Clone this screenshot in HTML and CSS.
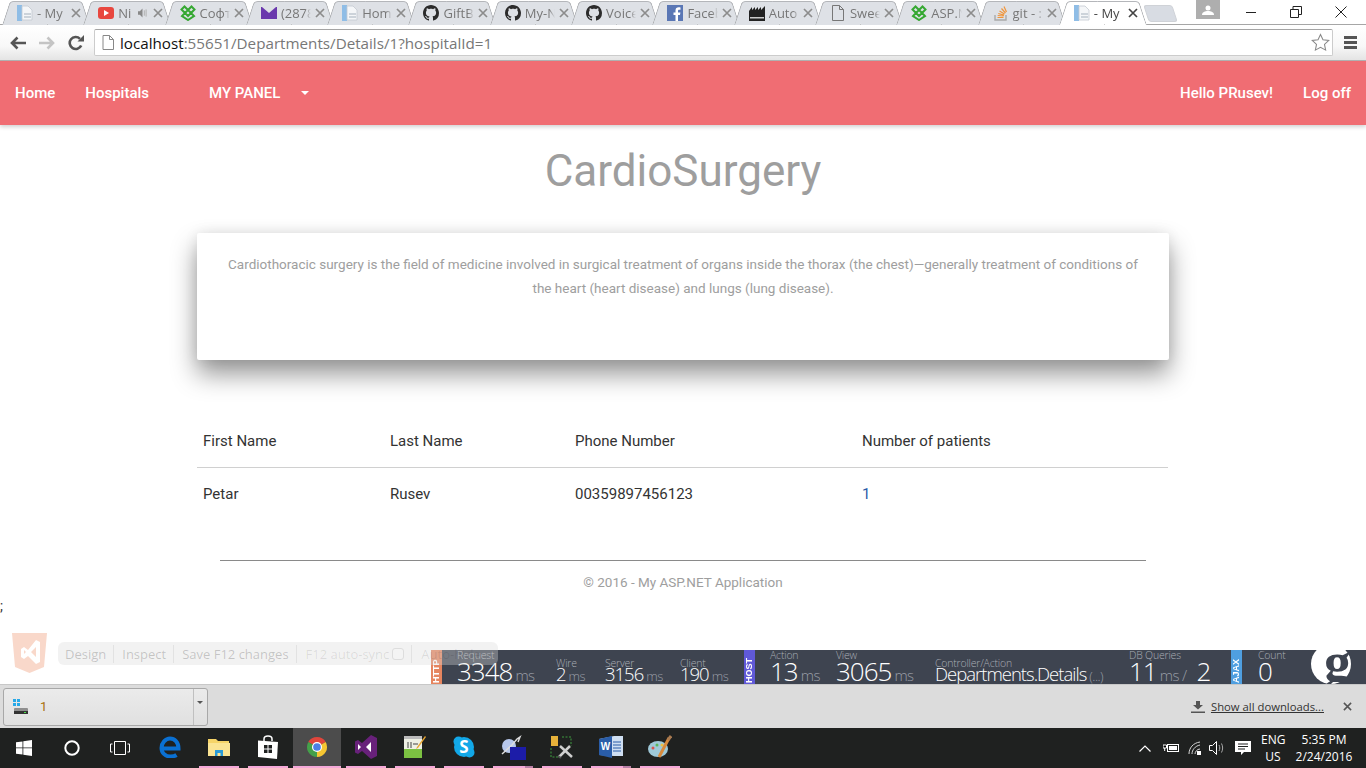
FILE: index.html
```html
<!DOCTYPE html>
<html lang="en">
<head>
    <meta charset="UTF-8">
    <title>CardioSurgery - My ASP.NET Application</title>
    <link rel="stylesheet" href="styles.css">
</head>
<body>
    <svg class="defs" width="0" height="0">
        <symbol id="i-x" viewBox="0 0 10 10">
            <path d="M1 1l8 8M9 1l-8 8" fill="none" stroke="currentColor" stroke-width="1.700"/>
        </symbol>
        <symbol id="i-doc" viewBox="0 0 16 16">
            <rect x="0" y="0" width="5" height="16" fill="#8fbde6"/>
            <path d="M5 1h6l4 4v10H5z" fill="#f4f6f8" stroke="#c3c9d0" stroke-width=".8"/>
            <rect x="7" y="8" width="7" height="2" fill="#ccd3da"/>
            <rect x="7" y="11" width="7" height="2" fill="#ccd3da"/>
        </symbol>
        <symbol id="i-page" viewBox="0 0 16 16">
            <path d="M2.500 .5h7l4 4v11h-11z M9.500 .5v4h4" fill="none" stroke="#777" stroke-width="1"/>
        </symbol>
        <symbol id="i-gh" viewBox="0 0 16 16">
            <path fill="#2b2b2b" d="M8 0C3.58 0 0 3.58 0 8c0 3.54 2.29 6.53 5.47 7.59.4.07.55-.17.55-.38 0-.19-.01-.82-.01-1.49-2.01.37-2.53-.49-2.69-.94-.09-.23-.48-.94-.82-1.13-.28-.15-.68-.52-.01-.53.63-.01 1.08.58 1.23.82.72 1.21 1.87.87 2.33.66.07-.52.28-.87.51-1.07-1.78-.2-3.64-.89-3.64-3.95 0-.87.31-1.59.82-2.15-.08-.2-.36-1.02.08-2.12 0 0 .67-.21 2.2.82.64-.18 1.32-.27 2-.27.68 0 1.36.09 2 .27 1.53-1.04 2.2-.82 2.2-.82.44 1.1.16 1.92.08 2.12.51.56.82 1.27.82 2.15 0 3.07-1.87 3.75-3.65 3.95.29.25.54.73.54 1.48 0 1.07-.01 1.93-.01 2.2 0 .21.15.46.55.38A8.013 8.013 0 0016 8c0-4.42-3.58-8-8-8z"/>
        </symbol>
        <symbol id="i-soft" viewBox="0 0 16 16">
            <path d="M1.500 4.500L4.500 1.500 8 5l3.500-3.500 3 3L11 8l3 3-6 4-6-4 3-3z M5 8l3-3 3 3-3 3z" fill="none" stroke="#36a832" stroke-width="2"/>
        </symbol>
    </svg>

    <div class="tabstrip">
        <div class="tab"><svg class="fav"><use href="#i-doc"/></svg><span class="tab-title">- My</span><svg class="tab-x"><use href="#i-x"/></svg></div>
        <div class="tab">
            <svg class="fav" viewBox="0 0 16 16"><rect y="2" width="16" height="12" rx="3" fill="#e8473f"/><path d="M6 5l5 3-5 3z" fill="#fff"/></svg>
            <span class="tab-title">Ni</span>
            <svg class="tab-sound" viewBox="0 0 10 10"><path d="M0 3h2l3-3v10l-3-3H0z" fill="#888"/><path d="M7 2v6M9 1v8" stroke="#aaa"/></svg>
            <svg class="tab-x"><use href="#i-x"/></svg>
        </div>
        <div class="tab"><svg class="fav"><use href="#i-soft"/></svg><span class="tab-title">Софт</span><svg class="tab-x"><use href="#i-x"/></svg></div>
        <div class="tab">
            <svg class="fav" viewBox="0 0 16 16"><rect y="2" width="16" height="12" fill="#6a38ad"/><path d="M1 2h14L8 8z" fill="#dee1e6"/></svg>
            <span class="tab-title">(2878</span><svg class="tab-x"><use href="#i-x"/></svg>
        </div>
        <div class="tab"><svg class="fav"><use href="#i-doc"/></svg><span class="tab-title">Hom</span><svg class="tab-x"><use href="#i-x"/></svg></div>
        <div class="tab"><svg class="fav"><use href="#i-gh"/></svg><span class="tab-title">GiftB</span><svg class="tab-x"><use href="#i-x"/></svg></div>
        <div class="tab"><svg class="fav"><use href="#i-gh"/></svg><span class="tab-title">My-N</span><svg class="tab-x"><use href="#i-x"/></svg></div>
        <div class="tab"><svg class="fav"><use href="#i-gh"/></svg><span class="tab-title">Voice</span><svg class="tab-x"><use href="#i-x"/></svg></div>
        <div class="tab">
            <svg class="fav" viewBox="0 0 16 16"><rect width="16" height="16" fill="#5a77b5"/><path d="M11 16v-6h2l.4-2.500H11V6c0-.8.3-1.300 1.300-1.300h1.200V2.400C13 2.300 12.300 2.300 11.700 2.300 9.800 2.300 8.500 3.400 8.500 5.600v1.900H6.500V10h2v6z" fill="#fff"/></svg>
            <span class="tab-title">Faceb</span><svg class="tab-x"><use href="#i-x"/></svg>
        </div>
        <div class="tab">
            <svg class="fav" viewBox="0 0 16 16"><path d="M0 16V6l3-4v3l3-3v3l3-3v3l3-3v3l4-4v15z" fill="#222"/><rect x="1" y="12" width="14" height="1.500" fill="#ccc"/></svg>
            <span class="tab-title">Auto</span><svg class="tab-x"><use href="#i-x"/></svg>
        </div>
        <div class="tab"><svg class="fav"><use href="#i-page"/></svg><span class="tab-title">Swee</span><svg class="tab-x"><use href="#i-x"/></svg></div>
        <div class="tab"><svg class="fav"><use href="#i-soft"/></svg><span class="tab-title">ASP.N</span><svg class="tab-x"><use href="#i-x"/></svg></div>
        <div class="tab">
            <svg class="fav" viewBox="0 0 16 16"><path d="M2 10v5h11v-5" fill="none" stroke="#a9a9a9" stroke-width="1.400"/><path d="M4.500 12.500h6M4.700 10.500l6 .5M5.300 8.500l5.800 1.600M6.500 6l5 3M8.500 3.500l4 4.500M11 1.500l2.500 5.500" stroke="#f0963c" stroke-width="1.200"/></svg>
            <span class="tab-title">git - :</span><svg class="tab-x"><use href="#i-x"/></svg>
        </div>
        <div class="tab tab-active"><svg class="fav"><use href="#i-doc"/></svg><span class="tab-title">- My</span><svg class="tab-x"><use href="#i-x"/></svg></div>
        <div class="tab-new"></div>
        <div class="profile">
            <svg width="12" height="10" viewBox="0 0 12 10"><circle cx="6" cy="3" r="2.500" fill="#fff"/><path d="M0 10c0-3 3-4 6-4s6 1 6 4z" fill="#fff"/></svg>
        </div>
        <div class="winctl">
            <svg width="12" height="12" viewBox="0 0 12 12"><path d="M1 6.500h10" stroke="#222"/></svg>
            <svg width="12" height="12" viewBox="0 0 12 12"><path d="M.5 3.500h8v8h-8zM3 3.500V.500h8.500v8H8.500" fill="none" stroke="#222"/></svg>
            <svg width="12" height="12" viewBox="0 0 12 12"><path d="M.5 .5l11 11M11.500 .5l-11 11" stroke="#222"/></svg>
        </div>
    </div>

    <div class="toolbar">
        <svg class="tool-btn" viewBox="0 0 16 14"><path d="M16 7H2M7.500 1.500L2 7l5.500 5.500" fill="none" stroke="#555" stroke-width="2.600"/></svg>
        <svg class="tool-btn" viewBox="0 0 16 14"><path d="M0 7h14M8.500 1.500L14 7l-5.500 5.500" fill="none" stroke="#c4c4c4" stroke-width="2.600"/></svg>
        <svg class="tool-btn" viewBox="0 0 16 16"><path d="M13.200 10.500A6 6 0 1 1 12 3.800" fill="none" stroke="#555" stroke-width="2.600"/><path d="M9.500 6.500H16V0z" fill="#555"/></svg>
        <div class="omnibox">
            <svg class="omni-page" viewBox="0 0 12 15"><path d="M1 .5h6.500l4 4V14.500H1z M7.500 .5v4h4" fill="#fff" stroke="#888"/></svg>
            <div class="url"><span class="url-host">localhost</span>:55651/Departments/Details/1?hospitalId=1</div>
            <svg class="omni-star" viewBox="0 0 20 20"><path d="M10 1.500l2.600 5.600 6.100.7-4.500 4.200 1.200 6L10 15l-5.400 3 1.200-6L1.300 7.800l6.100-.7z" fill="#fff" stroke="#888" stroke-width="1.100"/></svg>
        </div>
        <div class="menu-btn"><i></i><i></i><i></i></div>
    </div>

    <div class="page">
        <nav class="navbar">
            <a class="nav-link">Home</a>
            <a class="nav-link">Hospitals</a>
            <a class="nav-link nav-panel">MY PANEL <span class="caret"></span></a>
            <a class="nav-link nav-hello">Hello PRusev!</a>
            <a class="nav-link">Log off</a>
        </nav>

        <h1 class="title">CardioSurgery</h1>

        <div class="card">
            <p>Cardiothoracic surgery is the field of medicine involved in surgical treatment of organs inside the thorax (the chest)—generally treatment of conditions of the heart (heart disease) and lungs (lung disease).</p>
        </div>

        <table class="doctors">
            <thead>
                <tr>
                    <th class="col-first">First Name</th>
                    <th class="col-last">Last Name</th>
                    <th class="col-phone">Phone Number</th>
                    <th>Number of patients</th>
                </tr>
            </thead>
            <tbody>
                <tr>
                    <td>Petar</td>
                    <td>Rusev</td>
                    <td>00359897456123</td>
                    <td><a class="patients">1</a></td>
                </tr>
            </tbody>
        </table>

        <hr class="rule">
        <footer class="footer">© 2016 - My ASP.NET Application</footer>
        <div class="stray">;</div>

        <!-- glimpse bar and browser link sit over the bottom of the page -->
        <div class="glimpse">
            <div class="g-tag g-http">HTTP</div>
            <div class="g-item g-big g-request"><label>Request</label><div>3348<small>ms</small></div></div>
            <div class="g-item g-wire"><label>Wire</label><div>2<small>ms</small></div></div>
            <div class="g-item g-server"><label>Server</label><div>3156<small>ms</small></div></div>
            <div class="g-item g-client"><label>Client</label><div>190<small>ms</small></div></div>
            <div class="g-tag g-host">HOST</div>
            <div class="g-item g-big g-action"><label>Action</label><div>13<small>ms</small></div></div>
            <div class="g-item g-big g-view"><label>View</label><div>3065<small>ms</small></div></div>
            <div class="g-item g-ctrl"><label>Controller/Action</label><div>Departments.Details<small>(...)</small></div></div>
            <div class="g-item g-big g-db"><label>DB Queries</label><div>11<small>ms</small><small class="g-slash">/</small>2</div></div>
            <div class="g-tag g-ajax">AJAX</div>
            <div class="g-item g-big g-count"><label>Count</label><div>0</div></div>
            <div class="g-logo">g</div>
        </div>

        <div class="browserlink">
            <svg class="bl-logo" viewBox="0 0 35 40">
                <path d="M0 0h35l-3 34-14.500 6L3 34z" fill="#f9d8ca"/>
                <path d="M24 7l4 2v20l-4 2-8-8-4 3-3-2v-8l3-2 4 3zM12 17v4l2-2zM24 14l-5 5 5 5z" fill="#fff" fill-rule="evenodd"/>
            </svg>
            <div class="bl-pill">
                <span>Design</span>
                <span>Inspect</span>
                <span>Save F12 changes</span>
                <span class="bl-off">F12 auto-sync<i class="bl-check"></i></span>
                <span class="bl-off">Auto-hide</span>
            </div>
        </div>
    </div>

    <div class="downloads">
        <div class="dl-item">
            <div class="dl-main">
                <svg width="16" height="16" viewBox="0 0 16 16"><g fill="#27a9e8"><rect width="3" height="3"/><rect x="4" width="3" height="3"/><rect y="4" width="3" height="3"/><rect x="4" y="4" width="3" height="3"/></g><rect x="1" y="9" width="14" height="6" rx="1" fill="#8f8f8f"/><rect x="1" y="12" width="14" height="3" fill="#333"/><rect x="11" y="13" width="2" height="1" fill="#4be04b"/></svg>
                <span class="dl-name">1</span>
            </div>
            <div class="dl-arrow"></div>
        </div>
        <div class="dl-all">
            <svg width="14" height="12" viewBox="0 0 14 12"><path d="M5 0h4v4h3L7 8.500 2 4h3zM0 10.500h14V12H0z" fill="#555"/></svg>
            <a>Show all downloads...</a>
        </div>
        <svg class="dl-close"><use href="#i-x"/></svg>
    </div>

    <div class="taskbar">
        <div class="sys-btn"><svg width="16" height="16" viewBox="0 0 16 16"><path d="M0 2.300L6.500 1.400V7.500H0zM7.300 1.300L16 0V7.500H7.300zM0 8.300H6.500V14.500L0 13.700zM7.300 8.300H16V16L7.300 14.700z" fill="#fff"/></svg></div>
        <div class="sys-btn"><svg width="16" height="16" viewBox="0 0 16 16"><circle cx="8" cy="8" r="6.700" fill="none" stroke="#fff" stroke-width="2"/></svg></div>
        <div class="sys-btn"><svg width="20" height="14" viewBox="0 0 20 14"><path d="M4.500 .5h11v13h-11zM2.500 3H.5v8h2M17.500 3h2v8h-2" fill="none" stroke="#fff"/></svg></div>
        <div class="apps">
            <div class="app app-edge"><div class="app-icon"><svg width="22" height="22" viewBox="0 0 22 22"><path d="M3 12.500h16.500C19.500 6 15.500 2.500 11 2.500S2.500 7 2.500 12c0 5 4 8.500 9 8.500 2.500 0 4.500-.5 6-1.500" fill="none" stroke="#0a70d2" stroke-width="4"/></svg></div></div>
            <div class="app"><div class="app-icon"><svg width="22" height="20" viewBox="0 0 22 20"><path d="M0 2h8l2 2h11v15H0z" fill="#f6d468"/><path d="M0 6h22v13H0z" fill="#fbe493"/><path d="M7 19v-6h8v6h-2.500v-3h-3v3z" fill="#2a9ad6"/></svg></div><div class="app-line"></div></div>
            <div class="app"><div class="app-icon"><svg width="22" height="24" viewBox="0 0 22 24"><path d="M7 6V4c0-4 8-4 8 0v2" fill="none" stroke="#fff" stroke-width="1.500"/><path d="M1 5.500L21 7l-1 17L1 22z" fill="#fff"/><path d="M7 10h3.500v3.500H7zM11.500 10H15v3.500h-3.500zM7 14.500h3.500V18H7zM11.500 14.500H15V18h-3.500z" fill="#1f2120"/></svg></div><div class="app-line"></div></div>
            <div class="app app-on"><div class="app-icon"><svg width="22" height="22" viewBox="0 0 24 24"><path d="M2.500 6.500L12 12l9.500-5.500A11 11 0 0 0 2.500 6.500z" fill="#e0463c"/><path d="M21.500 6.500L12 12v11a11 11 0 0 0 9.500-16.500z" fill="#f6c632"/><path d="M12 12v11A11 11 0 0 1 2.500 6.500z" fill="#44a04a"/><circle cx="12" cy="12" r="5.500" fill="#fff"/><circle cx="12" cy="12" r="4.200" fill="#4a80e6"/></svg></div><div class="app-line"></div></div>
            <div class="app"><div class="app-icon"><svg width="22" height="24" viewBox="0 0 22 24"><path d="M16 0l6 3v18l-6 3-9-8-4 3-3-1.500v-11L3 5l4 3z" fill="#68217a"/><path d="M16 7l-5 5 5 5zM3 9v6l3-3z" fill="#fff"/></svg></div><div class="app-line"></div></div>
            <div class="app"><div class="app-icon"><svg width="22" height="24" viewBox="0 0 22 24"><rect y="1" width="18" height="22" fill="#eef0e4"/><rect y="1" width="18" height="3" fill="#bbb"/><rect y="14" width="18" height="9" fill="#7cc142"/><path d="M4 7v6M7 7v6M9 9h5" stroke="#444" fill="none"/><path d="M21 1l1 1-8 11-2 1 1-2z" fill="#e8a531"/></svg></div><div class="app-line"></div></div>
            <div class="app"><div class="app-icon"><svg width="24" height="24" viewBox="0 0 24 24"><circle cx="12" cy="12" r="10" fill="#12a8e8"/><circle cx="6.500" cy="6.500" r="5" fill="#12a8e8"/><circle cx="17.500" cy="17.500" r="5" fill="#12a8e8"/><text class="skype-s" x="12" y="18" text-anchor="middle">S</text></svg></div><div class="app-line"></div></div>
            <div class="app"><div class="app-icon"><svg width="26" height="26" viewBox="0 0 26 26"><circle cx="9" cy="12" r="7" fill="#b7c8ec"/><path d="M2 20l10-9 5-6 3-2-2 5" fill="none" stroke="#ddd" stroke-width="1.500"/><rect x="10" y="13" width="16" height="16" fill="#1c1ca8"/></svg></div><div class="app-line app-line-split"></div></div>
            <div class="app"><div class="app-icon"><svg width="24" height="24" viewBox="0 0 24 24"><rect x="1" y="1" width="7" height="10" fill="#e8b33a"/><path d="M1 13v9h8M12 2h9v9" fill="none" stroke="#3f9c3f" stroke-dasharray="2 1.500"/><path d="M9 22l11-11M22 22L10 11" stroke="#cfcfcf" stroke-width="2.500"/><path d="M8 21l3 2" stroke="#555" stroke-width="2"/></svg></div><div class="app-line"></div></div>
            <div class="app"><div class="app-icon"><svg width="24" height="22" viewBox="0 0 24 22"><path d="M0 3l15-3h9v20h-9L0 19z" fill="#cfdff2"/><path d="M0 3l13-3v22L0 19z" fill="#2a5da8"/><path d="M14 6h8M14 9h8M14 12h8M14 15h8" stroke="#2a5da8"/><text class="word-w" x="6.500" y="14" text-anchor="middle">W</text></svg></div><div class="app-line app-line-split"></div></div>
            <div class="app"><div class="app-icon"><svg width="24" height="24" viewBox="0 0 24 24"><ellipse cx="10" cy="14" rx="10" ry="8" fill="#9fc9d8"/><circle cx="5" cy="13" r="1.500" fill="#d9534f"/><circle cx="9" cy="10" r="1.500" fill="#5cb85c"/><circle cx="14" cy="10" r="1.500" fill="#f0c040"/><path d="M11 22L21 3" stroke="#d88a3c" stroke-width="3"/><path d="M20 5l3-4" stroke="#a87a50" stroke-width="3"/></svg></div><div class="app-line"></div></div>
        </div>
        <div class="tray">
            <svg class="tray-chev" width="12" height="7" viewBox="0 0 12 7"><path d="M.5 6.500L6 1l5.500 5.500" fill="none" stroke="#fff" stroke-width="1.200"/></svg>
            <svg class="tray-batt" width="16" height="10" viewBox="0 0 16 10"><rect x="4.500" y="1.500" width="11" height="7" fill="none" stroke="#fff"/><rect x="6" y="3" width="8" height="4" fill="#fff"/><path d="M0 2h3.500v3H0zM1.700 5v3" stroke="#fff"/></svg>
            <svg class="tray-wifi" width="14" height="14" viewBox="0 0 14 14"><path d="M1 13C1 7 5 2 12 1M4 13c0-4 3-8 8-9M7 13c0-2 2-5 5-5" fill="none" stroke="#d8d8d8"/><rect x="9" y="10" width="4" height="4" fill="#fff"/></svg>
            <svg class="tray-vol" width="16" height="14" viewBox="0 0 16 14"><path d="M.5 4.500h3l4-4v13l-4-4h-3z" fill="none" stroke="#fff"/><path d="M10 4c1 2 1 4 0 6M12.500 2.500c1.500 3 1.500 6 0 9" fill="none" stroke="#aaa"/></svg>
            <svg class="tray-note" width="16" height="16" viewBox="0 0 16 16"><path d="M0 1h16v11H9l-3 3v-3H0z" fill="#fff"/><path d="M3 4h10M3 6.500h10M3 9h7" stroke="#1f2120"/></svg>
            <div class="tray-lang">ENG<br>US</div>
            <div class="tray-clock">5:35 PM<br>2/24/2016</div>
        </div>
    </div>
</body>
</html>
```

FILE: styles.css
```css
html, body {
    margin: 0;
    height: 768px;
    overflow: hidden;
}
body {
    display: flex;
    flex-direction: column;
    background-color: #fff;
    font-family: Roboto, Arial, sans-serif;
}
.defs {
    display: block;
    height: 0;
}

/* chrome tabs */
.tabstrip {
    display: flex;
    height: 24px;
    flex: none;
    padding-top: 1px;
    box-sizing: border-box;
    background-color: #fff;
    font-family: "Open Sans", sans-serif;
}
.tab {
    position: relative;
    z-index: 0;
    display: flex;
    align-items: center;
    flex: none;
    width: 81.3px;
    height: 24px;
    box-sizing: border-box;
    padding-left: 17px;
    font-size: 13px;
    color: #777;
}
.tab::before, .tab::after {
    content: "";
    position: absolute;
    z-index: -1;
    top: 0;
    bottom: 0;
    background-color: #dee1e6;
    border-top: 1px solid #b4b6ba;
}
.tab::before {
    left: 6px;
    width: 44px;
    border-left: 1px solid #a9abae;
    border-top-left-radius: 4px;
    transform: skewX(-18deg);
}
.tab::after {
    left: 44px;
    width: 41px;
    border-right: 1px solid #a9abae;
    border-top-right-radius: 4px;
    transform: skewX(18deg);
}
.tab-active {
    z-index: 1;
    color: #444;
}
.tab-active::before, .tab-active::after {
    background-color: #fff;
}
.fav {
    flex: none;
    width: 16px;
    height: 16px;
}
.tab-title {
    flex: 1;
    min-width: 0;
    margin: 0 4px;
    overflow: hidden;
    white-space: nowrap;
    -webkit-mask-image: linear-gradient(to right, #000 80%, transparent 100%);
    mask-image: linear-gradient(to right, #000 80%, transparent 100%);
}
.tab-sound {
    flex: none;
    width: 9px;
    height: 10px;
    margin-right: 6px;
}
.tab-x {
    flex: none;
    width: 10px;
    height: 10px;
    color: #8c8c8c;
}
.tab-active .tab-x {
    color: #444;
}
.tab-new {
    flex: none;
    width: 27px;
    height: 15px;
    margin: 4px 0 0 8px;
    background-color: #d8dce3;
    border: 1px solid #cfd2d7;
    border-radius: 3px;
    transform: skewX(18deg);
}
.profile {
    display: flex;
    align-items: center;
    justify-content: center;
    flex: none;
    width: 24px;
    height: 19px;
    margin: -1px 0 0 21px;
    background-color: #aeaeae;
}
.winctl {
    display: flex;
    gap: 33px;
    margin: 5px 0 0 25px;
}

/* chrome toolbar */
.toolbar {
    display: flex;
    align-items: center;
    flex: none;
    height: 37px;
    box-sizing: border-box;
    padding-left: 10px;
    border-top: 1px solid #a6a6a6;
    border-bottom: 1px solid #b0b0b0;
    background: linear-gradient(#fff, #f8f8f8 60%, #e4e4e4);
}
.tool-btn {
    flex: none;
    width: 16px;
    height: 16px;
    margin-right: 13px;
}
.omnibox {
    display: flex;
    align-items: center;
    flex: none;
    width: 1239px;
    height: 27px;
    margin-left: -3px;
    box-sizing: border-box;
    padding: 0 2px 0 7px;
    background-color: #fff;
    border: 1px solid #ccc;
    border-top-color: #a4a4a4;
    border-radius: 2px;
}
.omni-page {
    flex: none;
    width: 12px;
    height: 15px;
}
.url {
    flex: 1;
    margin-left: 6px;
    font-family: "Open Sans", sans-serif;
    font-size: 15.2px;
    color: #777;
}
.url-host {
    color: #111;
}
.omni-star {
    flex: none;
    width: 19px;
    height: 19px;
}
.menu-btn {
    display: flex;
    flex-direction: column;
    gap: 2px;
    margin-left: 11px;
}
.menu-btn i {
    display: block;
    width: 13px;
    height: 3px;
    background-color: #555;
}

/* page */
.page {
    position: relative;
    flex: none;
    height: 623px;
    overflow: hidden;
    background-color: #fff;
}
.navbar {
    display: flex;
    align-items: center;
    height: 64px;
    background-color: #f06d73;
    box-shadow: 0 2px 4px rgba(0, 0, 0, 0.18);
}
.nav-link {
    padding: 0 15px;
    font-size: 15px;
    font-weight: 500;
    color: #fff;
}
.nav-panel {
    display: flex;
    align-items: center;
    margin-left: 30px;
}
.nav-hello {
    margin-left: auto;
}
.caret {
    width: 0;
    height: 0;
    margin-left: 21px;
    border-top: 4.5px solid #fff;
    border-left: 4.5px solid transparent;
    border-right: 4.5px solid transparent;
}
.title {
    margin: 22px 0 38px;
    font-size: 44px;
    line-height: 48px;
    font-weight: 400;
    text-align: center;
    color: #9e9e9e;
}
.card {
    width: 972px;
    height: 127px;
    box-sizing: border-box;
    margin: 0 auto;
    padding: 19px 25px;
    background-color: #fff;
    border-radius: 2px;
    box-shadow: 0 14px 26px rgba(0, 0, 0, 0.42), 0 0 14px rgba(0, 0, 0, 0.08);
}
.card p {
    margin: 0;
    font-size: 13.5px;
    line-height: 24px;
    text-align: center;
    color: #9e9e9e;
}
.doctors {
    width: 971px;
    margin: 55px 0 0 197px;
    border-collapse: collapse;
    table-layout: fixed;
    font-size: 15px;
    color: #333;
}
.doctors th, .doctors td {
    height: 52px;
    padding: 0 6px;
    text-align: left;
    font-weight: 400;
}
.doctors th {
    border-bottom: 1px solid #d0d0d0;
}
.col-first {
    width: 175px;
}
.col-last {
    width: 173px;
}
.col-phone {
    width: 275px;
}
.patients {
    color: #2a5ba8;
}
.rule {
    width: 926px;
    margin: 40px auto 11px;
    border: none;
    border-top: 1px solid #8a8a8a;
}
.footer {
    font-size: 13.5px;
    line-height: 20px;
    text-align: center;
    color: #9e9e9e;
}
.stray {
    margin-top: 4px;
    font-size: 14px;
    line-height: 20px;
    color: #333;
}

/* glimpse */
.glimpse {
    position: absolute;
    right: 0;
    bottom: 0;
    display: flex;
    width: 935px;
    height: 34px;
    overflow: hidden;
    background-color: #3e4450;
    font-family: "Open Sans", sans-serif;
    font-weight: 300;
    color: #fff;
}
.g-tag {
    flex: none;
    width: 11px;
    box-sizing: border-box;
    padding-top: 1px;
    writing-mode: vertical-rl;
    transform: rotate(180deg);
    font-family: "Liberation Sans", sans-serif;
    font-size: 9px;
    font-weight: 700;
    line-height: 11px;
    text-align: left;
}
.g-http {
    background-color: #e5855f;
}
.g-host {
    background-color: #6059d8;
}
.g-ajax {
    background-color: #4f9fe0;
}
.g-item {
    flex: none;
    padding-top: 7px;
    white-space: nowrap;
    font-size: 18.5px;
    line-height: 14px;
    letter-spacing: -1px;
}
.g-item label {
    display: block;
    height: 10px;
    font-size: 10.5px;
    line-height: 12px;
    letter-spacing: -0.2px;
    color: #a9adb5;
}
.g-item small {
    margin-left: 3px;
    font-size: 13px;
    letter-spacing: -0.5px;
    color: #9a9ea7;
}
.g-big {
    padding-top: 0;
    font-size: 26px;
    line-height: 24px;
}
.g-big label {
    height: 9px;
    margin-top: -1px;
    margin-bottom: 1px;
}
.g-big small {
    font-size: 15px;
}
.g-slash {
    margin: 0 10px 0 11px;
}
.g-request {
    width: 99px;
    margin-left: 15px;
}
.g-wire {
    width: 49px;
}
.g-server {
    width: 75px;
}
.g-client {
    width: 64px;
}
.g-action {
    width: 66px;
    margin-left: 15px;
}
.g-view {
    width: 99px;
}
.g-ctrl {
    width: 194px;
}
.g-db {
    width: 102px;
}
.g-count {
    width: 53px;
    margin-left: 16px;
}
.g-logo {
    flex: none;
    width: 40px;
    height: 40px;
    margin-top: -6px;
    border-radius: 50%;
    background-color: #fff;
    font-family: "Liberation Serif", serif;
    font-size: 54px;
    font-weight: bold;
    line-height: 36px;
    text-align: right;
    color: #3e4450;
}

/* browser link */
.browserlink {
    position: absolute;
    left: 12px;
    bottom: 11px;
    display: flex;
    align-items: flex-end;
    gap: 11px;
}
.bl-logo {
    flex: none;
    width: 35px;
    height: 40px;
}
.bl-pill {
    display: flex;
    align-items: center;
    width: 440px;
    height: 23px;
    margin-bottom: 8px;
    box-sizing: border-box;
    padding-left: 7px;
    border-radius: 6px;
    background-color: rgba(218, 218, 218, 0.35);
    font-family: "Open Sans", sans-serif;
    font-size: 13px;
    color: rgba(0, 0, 0, 0.2);
}
.bl-pill span {
    display: flex;
    align-items: center;
    padding-right: 7px;
    margin-right: 8px;
    border-right: 1px solid #e2e2e2;
    white-space: nowrap;
}
.bl-pill span:last-child {
    border-right: none;
}
.bl-pill .bl-off {
    margin-left: 1px;
    color: rgba(0, 0, 0, 0.1);
}
.bl-check {
    width: 10px;
    height: 10px;
    margin-left: 3px;
    background-color: #f4f4f4;
    border: 1px solid #ddd;
    border-radius: 3px;
}

/* downloads shelf */
.downloads {
    display: flex;
    align-items: center;
    flex: none;
    height: 44px;
    box-sizing: border-box;
    padding: 0 14px 0 3px;
    background-color: #dcdcdc;
    border-top: 1px solid #c8c8c8;
}
.dl-item {
    display: flex;
    height: 38px;
    box-sizing: border-box;
    background: linear-gradient(#ebebeb, #e0e0e0);
    border: 1px solid #a8a8a8;
    border-radius: 3px;
}
.dl-main {
    display: flex;
    align-items: center;
    width: 190px;
    box-sizing: border-box;
    padding-left: 9px;
    border-right: 1px solid #c0c0c0;
}
.dl-name {
    margin-left: 11px;
    font-size: 13px;
    color: #a8700c;
}
.dl-arrow {
    position: relative;
    width: 13px;
}
.dl-arrow::after {
    content: "";
    position: absolute;
    top: 12px;
    left: 3px;
    border-top: 3px solid #555;
    border-left: 3px solid transparent;
    border-right: 3px solid transparent;
}
.dl-all {
    display: flex;
    align-items: center;
    gap: 6px;
    margin-left: auto;
    font-family: "Open Sans", sans-serif;
    font-size: 11.3px;
    color: #333;
}
.dl-all a {
    text-decoration: underline;
}
.dl-close {
    flex: none;
    width: 9px;
    height: 9px;
    margin-left: 19px;
    color: #555;
}

/* windows taskbar */
.taskbar {
    display: flex;
    flex: none;
    height: 40px;
    background-color: #1f2120;
    font-family: "Open Sans", sans-serif;
}
.sys-btn {
    display: flex;
    align-items: center;
    justify-content: center;
    flex: none;
    width: 48px;
}
.apps {
    display: flex;
    gap: 1px;
    margin-left: 2px;
}
.app {
    display: flex;
    flex-direction: column;
    flex: none;
    width: 48px;
}
.app-icon {
    display: flex;
    align-items: center;
    justify-content: center;
    flex: 1;
    min-height: 0;
}
.app-line {
    flex: none;
    height: 2px;
    margin: 0 4px;
    background-color: #f4a8d8;
}
.app-line-split {
    background: linear-gradient(to right, #f4a8d8 80%, #b97fa6 80%);
}
.app-edge {
    padding-bottom: 2px;
    box-sizing: border-box;
}
.app-on {
    background-color: #4c4c4c;
}
.app-on .app-line {
    margin: 0;
}
.skype-s {
    font-family: "Open Sans", sans-serif;
    font-size: 17px;
    font-weight: 700;
    fill: #fff;
}
.word-w {
    font-family: "Liberation Sans", sans-serif;
    font-size: 10px;
    font-weight: 700;
    fill: #fff;
}
.tray {
    display: flex;
    align-items: center;
    margin-left: auto;
    padding-right: 12px;
    font-size: 12px;
    line-height: 17px;
    text-align: center;
    color: #fff;
}
.tray-batt {
    margin-left: 12px;
}
.tray-wifi {
    margin-left: 9px;
}
.tray-vol {
    margin-left: 7px;
}
.tray-note {
    margin-left: 10px;
}
.tray-lang {
    width: 24px;
    margin-left: 10px;
}
.tray-clock {
    width: 60px;
    margin-left: 9px;
}
```
